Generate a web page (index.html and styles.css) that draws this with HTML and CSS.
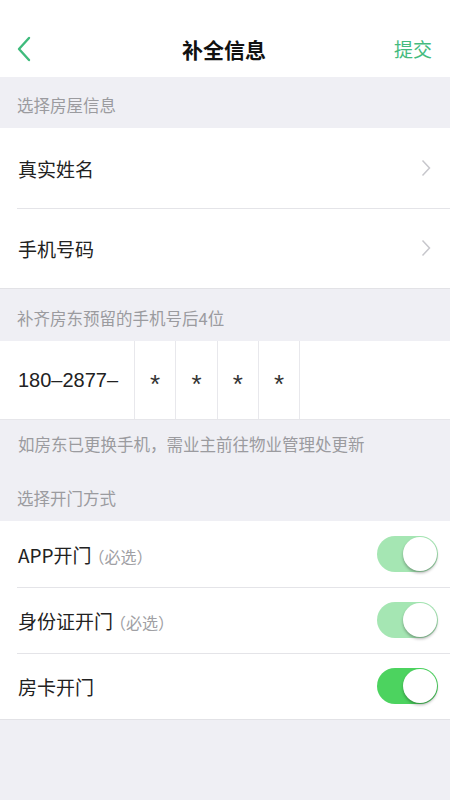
FILE: index.html
```html
<!DOCTYPE html>
<html lang="zh-CN">
<head>
  <meta charset="UTF-8">
  <title>补全信息</title>
  <link rel="stylesheet" href="styles.css">
</head>
<body>
  <div class="page">
    <div class="nav">
      <span class="back">
        <svg width="16" height="26" viewBox="0 0 16 26"><path d="M13 2 L3 13 L13 24" fill="none" stroke="#3fbb7c" stroke-width="2.4" stroke-linecap="round" stroke-linejoin="round"/></svg>
      </span>
      <h1 class="title">补全信息</h1>
      <span class="submit">提交</span>
    </div>

    <div class="section-title first">选择房屋信息</div>
    <div class="group">
      <div class="cell">
        <span class="label">真实姓名</span>
        <span class="arrow"><svg width="10" height="18" viewBox="0 0 10 18"><path d="M1.5 1.5 L8.5 9 L1.5 16.5" fill="none" stroke="#c7c7cc" stroke-width="1.5"/></svg></span>
      </div>
      <div class="cell">
        <span class="label">手机号码</span>
        <span class="arrow"><svg width="10" height="18" viewBox="0 0 10 18"><path d="M1.5 1.5 L8.5 9 L1.5 16.5" fill="none" stroke="#c7c7cc" stroke-width="1.5"/></svg></span>
      </div>
    </div>

    <div class="section-title">补齐房东预留的手机号后4位</div>
    <div class="phone-row">
      <span class="phone-prefix">180–2877–</span>
      <span class="digit">*</span>
      <span class="digit">*</span>
      <span class="digit">*</span>
      <span class="digit">*</span>
    </div>
    <div class="note">如房东已更换手机，需业主前往物业管理处更新</div>

    <div class="section-title">选择开门方式</div>
    <div class="group">
      <div class="cell switch-cell">
        <span class="label">APP开门<em class="tag">（必选）</em></span>
        <span class="switch disabled"><span class="knob"></span></span>
      </div>
      <div class="cell switch-cell">
        <span class="label">身份证开门<em class="tag">（必选）</em></span>
        <span class="switch disabled"><span class="knob"></span></span>
      </div>
      <div class="cell switch-cell">
        <span class="label">房卡开门</span>
        <span class="switch"><span class="knob"></span></span>
      </div>
    </div>
  </div>
</body>
</html>
```

FILE: styles.css
```css
body {
  margin: 0;
  font-family: "Noto Sans CJK SC", "Noto Sans", sans-serif;
  background: #efeff4;
  color: #222;
}
.page {
  width: 450px;
  min-height: 800px;
  background: #efeff4;
}
.nav {
  height: 77px;
  box-sizing: border-box;
  padding-top: 20px;
  background: #fff;
  display: flex;
  align-items: center;
  position: relative;
}
.back {
  width: 60px;
  padding-left: 16px;
  display: flex;
  align-items: center;
}
.title {
  flex: 1;
  margin: 0;
  text-align: center;
  font-size: 21px;
  font-weight: 700;
  color: #111;
}
.submit {
  width: 60px;
  padding-right: 18px;
  text-align: right;
  font-size: 19px;
  color: #45bb7e;
}
.section-title {
  font-size: 16.5px;
  color: #9b9b9f;
  padding: 17px 17px 0;
  height: 35px;
}
.section-title.first {
  padding-top: 16px;
}
.group {
  background: #fff;
  border-bottom: 1px solid #e2e2e6;
}
.cell {
  height: 80px;
  display: flex;
  align-items: center;
  justify-content: space-between;
  padding: 0 17px 0 18px;
  position: relative;
}
.cell + .cell::before {
  content: "";
  position: absolute;
  left: 17px;
  right: 0;
  top: 0;
  border-top: 1px solid #e4e4e8;
}
.label {
  font-size: 19px;
  color: #222;
}
.arrow {
  display: flex;
  padding-right: 2px;
}
.phone-row {
  height: 78px;
  background: #fff;
  display: flex;
  align-items: stretch;
  border-bottom: 1px solid #e6e6ea;
}
.phone-prefix {
  width: 116px;
  padding-left: 18px;
  display: flex;
  align-items: center;
  font-family: "Liberation Sans", sans-serif;
  font-size: 20px;
  color: #222;
  border-right: 1px solid #e8e8ec;
}
.digit {
  width: 41.3px;
  display: flex;
  align-items: center;
  justify-content: center;
  font-family: "Liberation Sans", sans-serif;
  font-size: 26px;
  padding-top: 8px;
  box-sizing: border-box;
  color: #333;
  border-right: 1px solid #e8e8ec;
}
.note {
  font-size: 16.5px;
  color: #9b9b9f;
  padding: 12px 18px 0;
  height: 37px;
}
.switch-cell {
  height: 66px;
}
.tag {
  font-style: normal;
  font-size: 16px;
  color: #a0a0a4;
  margin-left: -3px;
}
.switch {
  width: 61px;
  height: 36px;
  border-radius: 18px;
  background: #4cd35f;
  position: relative;
  margin-right: -5px;
}
.switch.disabled {
  background: #a5e6b3;
}
.knob {
  position: absolute;
  right: 1px;
  top: 1px;
  width: 34px;
  height: 34px;
  border-radius: 50%;
  background: #fff;
  box-shadow: 0 2px 3px rgba(0, 0, 0, 0.3);
}
```
